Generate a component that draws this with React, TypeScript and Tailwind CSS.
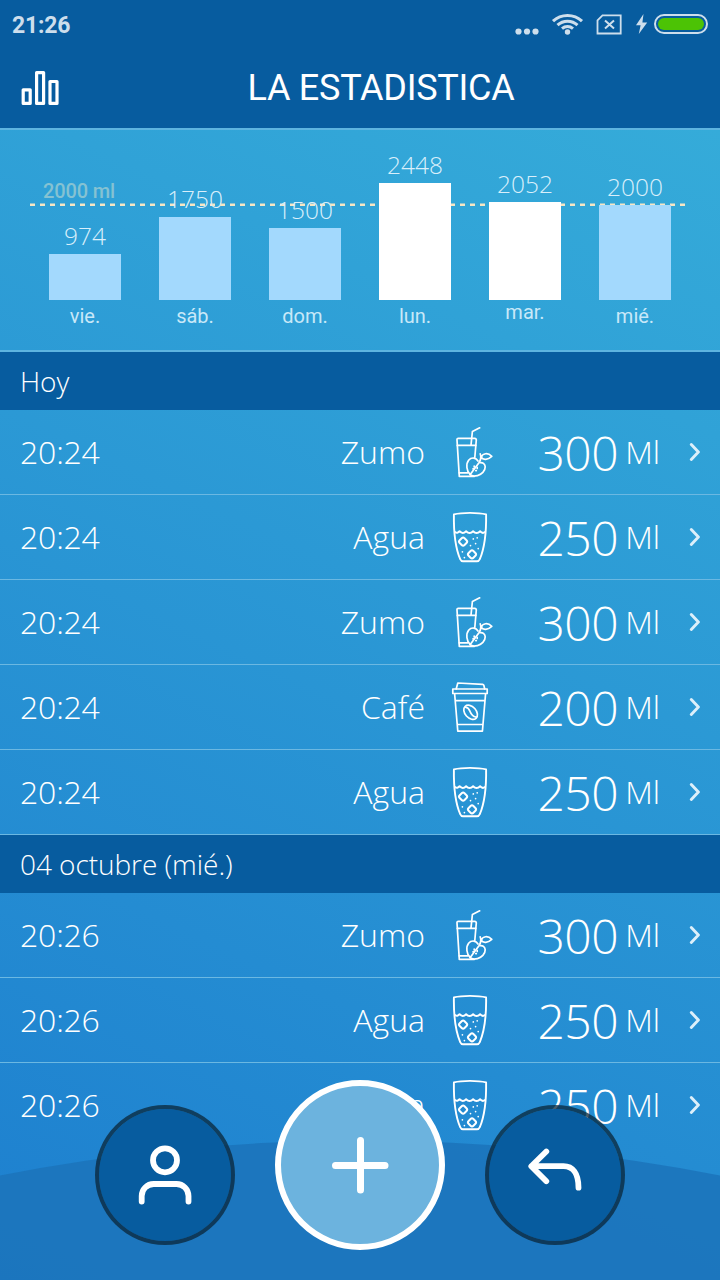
import clsx from "clsx";

type DrinkType = "Zumo" | "Agua" | "Café";

interface DayStat {
  day: string;
  value: number;
  height: number;
  reached?: boolean;
  raised?: boolean;
}

interface Entry {
  time: string;
  drink: DrinkType;
  amount: number;
}

interface Section {
  title: string;
  entries: Entry[];
}

const days: DayStat[] = [
  { day: "vie.", value: 974, height: 46 },
  { day: "sáb.", value: 1750, height: 83 },
  { day: "dom.", value: 1500, height: 72 },
  { day: "lun.", value: 2448, height: 117, reached: true },
  { day: "mar.", value: 2052, height: 98, reached: true, raised: true },
  { day: "mié.", value: 2000, height: 95 },
];

const sections: Section[] = [
  {
    title: "Hoy",
    entries: [
      { time: "20:24", drink: "Zumo", amount: 300 },
      { time: "20:24", drink: "Agua", amount: 250 },
      { time: "20:24", drink: "Zumo", amount: 300 },
      { time: "20:24", drink: "Café", amount: 200 },
      { time: "20:24", drink: "Agua", amount: 250 },
    ],
  },
  {
    title: "04 octubre (mié.)",
    entries: [
      { time: "20:26", drink: "Zumo", amount: 300 },
      { time: "20:26", drink: "Agua", amount: 250 },
      { time: "20:26", drink: "Agua", amount: 250 },
    ],
  },
];


function StatusBar() {
  return (
    <div className="flex h-12 items-center justify-between px-3 text-[#cddeec]">
      <span className="pt-[2px] font-['Roboto',sans-serif] text-[23px] font-bold leading-none tracking-[-0.2px]">21:26</span>
      <svg width="194" height="28" viewBox="514 10 194 28" fill="none">
        <g fill="currentColor">
          <circle cx="518.5" cy="31.5" r="3.1" />
          <circle cx="527" cy="31.5" r="3.1" />
          <circle cx="535.5" cy="31.5" r="3.1" />
          <circle cx="567.5" cy="32" r="2.7" />
          <path d="M643.5 14 636 25.2h4.6L638.8 34 647.2 22.4h-4.8z" />
        </g>
        <g stroke="currentColor" strokeWidth="3">
          <path d="M553 21.2a21 21 0 0 1 29 0" />
          <path d="M557.5 25.2a14.5 14.5 0 0 1 20 0" />
          <path d="M562 28.7a8.3 8.3 0 0 1 11 0" />
        </g>
        <path d="M602.5 15.3H620.7V33.5H597.5V20.3z" stroke="currentColor" strokeWidth="1.8" />
        <path d="M605 20.5l9 8M614 20.5l-9 8" stroke="currentColor" strokeWidth="2" />
        <rect x="655" y="15" width="52" height="18" rx="9" stroke="currentColor" strokeWidth="2" />
        <rect x="658" y="18" width="46" height="12" rx="6" fill="#4cc305" />
      </svg>
    </div>
  );
}


function Header() {
  return (
    <header className="h-[130px] shrink-0 border-b-2 border-[#5db4e0] bg-[#075c9f]">
      <StatusBar />
      <div className="grid h-20 grid-cols-[80px_1fr_38px] items-center">
        <svg className="ml-5" width="40" height="40" viewBox="20 68 40 40" fill="none" stroke="#fff" strokeWidth="3.2" strokeLinejoin="round">
          <rect x="23.2" y="89.8" width="7" height="13.6" />
          <rect x="36.6" y="72.6" width="7" height="30.8" />
          <rect x="50" y="81.5" width="7" height="21.9" />
        </svg>
        <h1 className="text-center font-['Roboto',sans-serif] text-[36px] leading-none tracking-[-0.25px] text-white">
          LA ESTADISTICA
        </h1>
      </div>
    </header>
  );
}


function DayBar({ stat }: { stat: DayStat }) {
  return (
    <div className="flex w-[72px] flex-col items-center">
      <span className="text-[24.5px] font-light leading-8 text-[#d9effb]">{stat.value}</span>
      <div
        className={clsx("mt-[2px] w-full", stat.reached ? "bg-white" : "bg-[#a3d9fd]")}
        style={{ height: stat.height }}
      />
      <span
        className={clsx(
          "h-[50px] font-['Roboto',sans-serif] text-[20px] leading-6 text-[#c8e8f8]",
          stat.raised ? "pt-0" : "pt-1",
        )}
      >
        {stat.day}
      </span>
    </div>
  );
}


function Chart() {
  return (
    <section className="relative h-[222px] shrink-0 border-b-2 border-[#5db4e0]">
      {/* daily goal */}
      <div className="absolute left-[30px] top-[48px]">
        <span className="block h-6 pl-[13px] pt-px font-['Roboto',sans-serif] text-[20px] font-medium leading-6 tracking-[-0.15px] text-[#85c2d2]">
          2000 ml
        </span>
        <svg className="block" width="655" height="5" viewBox="0 0 655 5">
          <line x1="0" y1="2.7" x2="655" y2="2.7" stroke="#f8e6c4" strokeWidth="2.4" strokeDasharray="5 5" />
        </svg>
      </div>
      <div className="relative flex h-full items-end justify-between px-[49px]">
        {days.map((stat) => (
          <DayBar key={stat.day} stat={stat} />
        ))}
      </div>
    </section>
  );
}


function DrinkIcon({ drink }: { drink: DrinkType }) {
  return (
    <svg
      className="ml-[25px] shrink-0"
      width="45"
      height="54"
      viewBox="0 0 45 54"
      fill="none"
      stroke="#fff"
      strokeWidth="1.7"
      strokeLinecap="round"
      strokeLinejoin="round"
    >
      {drink === "Zumo" && (
        <>
          <path d="M24.8 32.5 26.3 15q0-1.7-1.6-1.7H8.4Q6.8 13.3 7 15l2.3 36.4H24" />
          <path d="M7.3 20.4h18.5M9.2 47.8h8.6M21 20 22.4 6.5 29.7 2.8" />
          <path d="M28 36C26.2 32.6 21.5 31.8 18.6 35.2 15.6 39 16.6 46.5 20.2 49.7 22 51.6 25 51.2 27.5 50.6 31.5 49.6 35.3 46 35.2 41.8 35 38.8 32.6 37.2 30 37.6" />
          <path d="M20 49.7 28.8 38C31.3 34.5 31.2 31.5 30.2 28.8M31.3 32.2C32.6 28 38 27.4 41.8 31.4 38 34.9 33 35.5 31.3 32.2" />
          <path d="M24.2 41v1M23 43.8h.5M27.2 42.4v1M25.8 45.6h.5" />
        </>
      )}
      {drink === "Agua" && (
        <>
          <path d="M3.9 4.4C12 2.3 28 2.3 36.1 4.4 36.4 22 34.9 37 29.8 49.2q-.9 2.1-2.8 2.1H13q-1.9 0-2.8-2.1C5.1 37 3.6 22 3.9 4.4z" strokeWidth="1.9" />
          <path d="M5 22q2.4 2 4.6-.8 3 3.6 6.5 0 3.5 3.6 7 0 3.5 3.6 7 0 2.3 2.8 4.9.8" strokeWidth="2" />
          <rect x="9.7" y="28.2" width="6.8" height="6.8" rx="2" transform="rotate(45 13.1 31.6)" strokeWidth="2" />
          <rect x="18.6" y="41" width="6.8" height="6.8" rx="2" transform="rotate(45 22 44.4)" strokeWidth="2" />
          <path d="M23.3 28.9h.01M27.2 27.8h.01M20.5 35.6h.01M25.6 33.6h.01M28.2 38.6h.01M12.4 41.8h.01M14.4 47.6h.01" />
        </>
      )}
      {drink === "Café" && (
        <>
          <path d="M6.2 9 7.8 3 32.7 4.4Q33.8 4.6 34 6l.7 3" />
          <path d="M2.8 9h34.4v4.5H2.8zM4.6 13.5 7.8 51.2h24.6l3.2-37.7M5.4 20.6h29.4M7.4 44.5h25.4" />
          <ellipse cx="20.6" cy="32.3" rx="5.6" ry="8.1" transform="rotate(-42 20.6 32.3)" />
          <path d="M15.4 27.2c3.4.4 3.8 2.3 4.8 4.6s2 4.4 5.6 5.2" />
        </>
      )}
    </svg>
  );
}


function EntryRow({ entry }: { entry: Entry }) {
  return (
    <li className="flex h-[85px] items-center border-b border-[#6bb8e2] px-5 text-[32px] font-light leading-none text-white group-last:last:border-transparent">
      <span className="tracking-[-0.2px]">{entry.time}</span>
      <span className="ml-auto">{entry.drink}</span>
      <DrinkIcon drink={entry.drink} />
      <span className="flex w-[165px] items-center justify-end gap-[7px]">
        <span className="pt-[2px] text-[48px] leading-none tracking-[-0.5px]">{entry.amount}</span>
        <span>Ml</span>
      </span>
      <svg className="ml-[28px] shrink-0" width="12" height="20" viewBox="0 0 12 20" fill="none" stroke="#dceffa" strokeWidth="2.9" strokeLinecap="round" strokeLinejoin="round">
        <path d="M3.3 2.6 10.4 10l-7.1 7.4" />
      </svg>
    </li>
  );
}


function History() {
  return (
    <div>
      {sections.map((section) => (
        <section key={section.title} className="group">
          <h2 className="flex h-[58px] items-center bg-[#075c9f] pl-5 text-[28px] font-light leading-none tracking-[-0.05px] text-white">
            {section.title}
          </h2>
          <ul>
            {section.entries.map((entry, i) => (
              <EntryRow key={i} entry={entry} />
            ))}
          </ul>
        </section>
      ))}
    </div>
  );
}


// Floating buttons over the list
function BottomActions() {
  const sideButton =
    "flex size-[140px] items-center justify-center rounded-full border-4 border-[#0a2538]/75 bg-[#075c9f] bg-clip-padding";

  return (
    <nav className="absolute inset-x-0 bottom-[30px] flex items-end justify-center gap-10">
      <button type="button" aria-label="Perfil" className={clsx(sideButton, "mb-[5px]")}>
        <svg width="60" height="64" viewBox="135 1143 60 64" fill="none" stroke="#fff" strokeWidth="5.8" strokeLinecap="round">
          <circle cx="165" cy="1160.3" r="12" />
          <path d="M141.7 1201.5v-5.5a12 12 0 0 1 12-12h22.8a12 12 0 0 1 12 12v5.5" />
        </svg>
      </button>
      <button
        type="button"
        aria-label="Añadir"
        className="flex size-[170px] items-center justify-center rounded-full border-6 border-white bg-[#6cb3de]"
      >
        <svg width="60" height="60" viewBox="0 0 60 60" stroke="#fff" strokeWidth="7" strokeLinecap="round">
          <path d="M5.5 30.5h49.5M30.5 5.5v49.5" />
        </svg>
      </button>
      <button type="button" aria-label="Volver" className={clsx(sideButton, "mb-[5px]")}>
        <svg width="60" height="60" viewBox="525 1145 60 60" fill="none" stroke="#fff" strokeWidth="5.8" strokeLinecap="round" strokeLinejoin="round">
          <path d="M546.3 1151.5 531.3 1166.2l15 15M531.5 1166.2H563.5c9 0 15 7 15 21.5" />
        </svg>
      </button>
    </nav>
  );
}


function App() {
  return (
    <main className="relative flex h-[1280px] w-[720px] flex-col overflow-hidden bg-[linear-gradient(25deg,#1d7fcf,#37afda)] font-['Open_Sans',sans-serif]">
      {/* water surface */}
      <svg className="absolute inset-x-0 bottom-0" width="720" height="142" viewBox="0 1138 720 142">
        <circle cx="360" cy="3010" r="1869.5" fill="#1c74bb" fillOpacity="0.9" />
      </svg>
      <div className="relative">
        <Header />
        <Chart />
        <History />
      </div>
      <BottomActions />
    </main>
  );
}

export default App;
